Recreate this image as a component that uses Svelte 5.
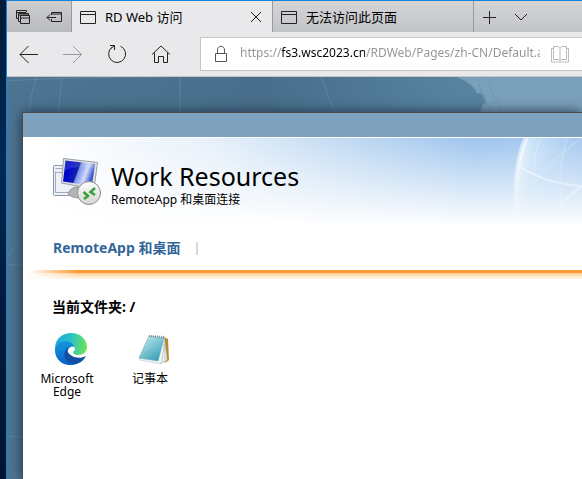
<script>
  let address = $state('https://fs3.wsc2023.cn/RDWeb/Pages/zh-CN/Default.aspx');
</script>

<div class="desktop">
  <div class="window">
    <div class="tabs">
      <div class="tools">
        <button aria-label="Tabs you've set aside">
          <svg width="16" height="16" viewBox="0 0 16 16"><path d="M3.500 9.500H1.500V1.500H11.500V3M1 3.500H11M5.500 12.500H3.500V4.500H13.500V6M4 6H13M5.500 6.500H14.500V14.500H5.500ZM5.500 9H14.500"/></svg>
        </button>
        <button aria-label="Set these tabs aside">
          <svg width="18" height="16" viewBox="0 0 18 16"><path d="M6.500 6V3.500H16.500V12.500H6.500V10M6.500 5H16.500M2 8.500H11M5 5.500L2 8.500L5 11.500"/></svg>
        </button>
      </div>
      <div class="tab active">
        <svg width="16" height="14" viewBox="0 0 16 14"><path d="M.5 1.500H15.500V13.500H.5ZM.5 4.500H15.500"/></svg>
        <span>RD Web 访问</span>
        <button aria-label="Close tab"><svg width="12" height="12" viewBox="0 0 12 12"><path d="M1 1L11 11M11 1L1 11"/></svg></button>
      </div>
      <div class="tab">
        <svg width="16" height="14" viewBox="0 0 16 14"><path d="M.5 1.500H15.500V13.500H.5ZM.5 4.500H15.500"/></svg>
        <span>无法访问此页面</span>
      </div>
      <div class="newtab">
        <button aria-label="New tab"><svg width="14" height="14" viewBox="0 0 14 14"><path d="M7.500 1V14M1 7.500H14"/></svg></button>
        <button aria-label="Tab previews"><svg width="14" height="14" viewBox="0 0 14 14"><path d="M1 4L7 10L13 4"/></svg></button>
      </div>
    </div>

    <div class="nav">
      <button aria-label="Back"><svg width="20" height="20" viewBox="0 0 20 20"><path d="M19 10.500H1M9.500 2L1 10.500L9.500 19"/></svg></button>
      <button aria-label="Forward" disabled><svg width="20" height="20" viewBox="0 0 20 20"><path d="M0 10.500H18M10 2L18.500 10.500L10 19"/></svg></button>
      <button aria-label="Refresh"><svg width="20" height="20" viewBox="0 0 20 20"><path d="M13.500 2.200A8.500 8.500 0 1 1 5 3.200M3 1.500H7.500V6M7.500 1.500L4 4.500"/></svg></button>
      <button aria-label="Home"><svg width="20" height="20" viewBox="0 0 20 20"><path d="M1 10.500L10 2L19 10.500M3.500 8.500V18.500H7.500V12.500H12.500V18.500H16.500V8.500"/></svg></button>
      <div class="address">
        <svg width="14" height="18" viewBox="0 0 14 18"><path d="M1.500 8.500H12.500V16.500H1.500ZM3.500 8.500V5C3.500 0 10.500 0 10.500 5V8.500"/></svg>
        <input type="text" aria-label="Address" bind:value={address} />
        <button aria-label="Reading view"><svg width="20" height="18" viewBox="0 0 20 18"><path d="M3.500 1.500H8.500L10 3L11.500 1.500H16.500V14.500H11.500L10 16L8.500 14.500H3.500ZM10 3V16M3 3.500H1.500V17H18.500V3.500H17"/></svg></button>
      </div>
    </div>

    <main class="page">
      <svg class="backdrop" width="575" height="402" viewBox="0 0 575 402" aria-hidden="true">
        <path class="sky" d="M450 0Q466 7 470 16Q480 17 479 25Q472 28 475 42H575V0Z"/>
        <path d="M455 0L466 10L477 17L479 27L472 36M471 0L474 15L488 42M481 0L485 15L500 42"/>
        <path class="faint" d="M0 4Q60 0 160 0M30 0Q24 14 22 36M55 0L51 36M173 0V36M314 0L328 36M0 188H16M0 359L16 360M0 180L16 160"/>
      </svg>
      <section class="panel">
        <div class="topbar"></div>
        <header>
          <svg class="globe" width="80" height="88" viewBox="0 0 80 88" aria-hidden="true">
            <defs>
              <linearGradient id="haze"><stop offset="0" stop-color="#fff" stop-opacity=".9"/><stop offset=".25" stop-color="#e2f3fc" stop-opacity=".6"/><stop offset="1" stop-color="#cce8fa" stop-opacity="0"/></linearGradient>
            </defs>
            <path fill="url(#haze)" d="M24 0C14 22 11 50 14 88H80V0Z"/>
            <path class="rim" d="M24 0C14 22 12 50 14 88"/>
            <path class="line" d="M19 29Q42 45 80 48M80 48Q60 62 48 82"/>
            <path class="thin" d="M38 0Q28 30 33 60M65 0Q54 35 60 70M80 0Q50 20 33 45M16 54Q40 70 65 72"/>
          </svg>
          <div class="brand">
            <svg width="50" height="50" viewBox="0 0 50 50" aria-hidden="true">
              <defs>
                <linearGradient id="screen" x2="1" y2=".3"><stop offset="0" stop-color="#0818a8"/><stop offset=".25" stop-color="#0006d0"/><stop offset=".52" stop-color="#1020a8"/><stop offset=".56" stop-color="#7890e8"/><stop offset=".8" stop-color="#d2dcfb"/><stop offset="1" stop-color="#4058d0"/></linearGradient>
                <linearGradient id="badge" x2="0" y2="1"><stop offset="0" stop-color="#fff"/><stop offset="1" stop-color="#d4d4d4"/></linearGradient>
              </defs>
              <rect x="1.500" y="7.500" width="24" height="30" rx="1" fill="#edf1f7" stroke="#8796a8"/>
              <path d="M3.500 10.500H10M3.500 13.500V34.500H23M3.500 14.500H10" fill="none" stroke="#9eacbc"/>
              <path d="M16 35Q19 30 23 29L30 31L29 40Q17 40 16 35Z" fill="#b4b4b4" stroke="#999"/>
              <path d="M11.500.5L45.500 4.500L42 31L9.500 25Z" fill="#e0e2e3" stroke="#9b9fa3"/>
              <path d="M13.500 2.500L43 6L40 28L11 23.500Z" fill="url(#screen)"/>
              <path d="M13.500 2.500L43 6L42.500 10Q23 7 12.500 13Z" fill="#fff" opacity=".12"/>
              <circle cx="37" cy="35" r="11.500" fill="url(#badge)" stroke="#8c8c8c"/>
              <path d="M31.500 34L36 38L32 41M43 30L38.500 34L43 37" fill="none" stroke="#35a135" stroke-width="2.500"/>
            </svg>
            <div class="titles">
              <h1>Work Resources</h1>
              <p>RemoteApp 和桌面连接</p>
            </div>
          </div>
          <nav class="section"><a href="#apps">RemoteApp 和桌面</a><i></i></nav>
        </header>
        <div class="rule"></div>
        <div class="content" id="apps">
          <h2>当前文件夹: /</h2>
          <div class="apps">
            <a href="#edge">
              <svg width="34" height="34" viewBox="0 0 34 34" aria-hidden="true">
                <defs>
                  <linearGradient id="e1" y1=".4" x2="1" y2=".5"><stop offset="0" stop-color="#1ba7dc"/><stop offset=".5" stop-color="#2bc4c4"/><stop offset="1" stop-color="#70e351"/></linearGradient>
                  <linearGradient id="e2" x2=".2" y2="1"><stop offset="0" stop-color="#169be0"/><stop offset="1" stop-color="#0861c8"/></linearGradient>
                </defs>
                <path fill="url(#e1)" d="M1 15C2 6 9 1 17 1C27 1 33 8 33 15C33 20 29 23 24 23C20 23 18 21 19 19C21 16 18 11 12 10C7 9 2 12 1 15Z"/>
                <path fill="url(#e2)" d="M1 16C2 11 7 9 11 9C17 9 21 13 20 17C17 14 12 17 12 22C12 28 17 33 23 32C20 33 17 33 14 33C6 32 0 25 1 16Z"/>
                <path fill="#104fa3" d="M14 16C7 21 11 31 19 32C25 33 30 28 32 24C27 27 20 26 17 23C14 21 13 18 17 15Z"/>
                <path fill="#fff" d="M14 18C15 14 21 13 21 17C21 19 19 19 19 21C20 24 26 24 30 22L31 24C26 26 20 25 17 23C14 21 13 20 14 18Z"/>
              </svg>
              <span>Microsoft Edge</span>
            </a>
            <a href="#notepad">
              <svg width="34" height="34" viewBox="0 0 34 34" aria-hidden="true">
                <defs><linearGradient id="note" x2=".7" y2="1"><stop offset="0" stop-color="#d1eef2"/><stop offset=".5" stop-color="#82c8d6"/><stop offset="1" stop-color="#399eb8"/></linearGradient></defs>
                <path d="M27 5L31 7L32 28L28 31Z" fill="#b88932"/>
                <path d="M27 4L30 28L24 32L3 28L2 26Z" fill="#eef4f5" stroke="#b8c5c9" stroke-width=".6"/>
                <path d="M12 4L27 6L21 29L2 26Z" fill="url(#note)" stroke="#75a9b4" stroke-width=".6"/>
                <path d="M27 7L28 29L23 31M27 12L25 30" fill="none" stroke="#b5c0c4" stroke-width=".7"/>
                <path d="M12 4L28 5" stroke="#7f8c90" stroke-width="2" stroke-dasharray="1 1"/>
              </svg>
              <span>记事本</span>
            </a>
          </div>
        </div>
      </section>
    </main>
  </div>
</div>

<style>
  :global(body) { margin: 0; overflow: hidden; }
  * { box-sizing: border-box; }
  .desktop {
    min-height: 100vh; display: flex; padding-left: 6px; color: #000;
    background: linear-gradient(#001b3a, #002a55 35%, #001c3e 60%, #001532);
    font: 12px/16px "Noto Sans", "Noto Sans CJK SC", sans-serif;
  }
  .window { flex: 1; min-width: 0; display: flex; flex-direction: column; border: solid #1882d8; border-width: 1px 0 0 1px; }
  svg { flex: none; fill: none; stroke: #222; }
  .brand svg, .apps svg, .globe { stroke: none; }
  button { border: 0; padding: 0; background: none; display: flex; align-items: center; justify-content: center; }

  .tabs { display: flex; height: 31px; background: linear-gradient(#d4d5d7, #c2c4c7); overflow: hidden; }
  .tools { width: 65px; display: flex; align-items: center; justify-content: space-between; padding: 0 8px; border-right: 1px solid #98999b; background: linear-gradient(#cccdcf, #b9bbbe); }
  .tab { width: 201px; flex: none; display: flex; align-items: center; gap: 9px; padding: 0 10px 0 8px; border-right: 1px solid #989a9e; font-size: 13px; }
  .tab.active { background: #e9e9eb; }
  .tab span { flex: 1; white-space: nowrap; }
  .newtab { display: flex; gap: 18px; padding-left: 8px; }

  .nav { height: 45px; flex: none; display: flex; align-items: center; gap: 24px; padding-left: 12px; background: #e9e9eb; border-bottom: 1px solid #c4c4c6; }
  .nav > button:disabled { opacity: .4; }
  .address { flex: 1; min-width: 0; height: 34px; margin-left: 5px; display: flex; align-items: center; padding: 0 12px 0 13px; background: #fff; border: 1px solid #c5c5c7; border-right: 0; }
  .address svg { stroke: #555; }
  .address button svg { stroke: #bbb; }
  .address input {
    flex: 1; min-width: 0; height: 24px; margin: 0 10px 4px 12px; padding: 0; border: 0; outline: 0;
    font: inherit; color: transparent;
    background: linear-gradient(90deg, #929292 42px, #000 42px 125px, #929292 125px);
    background-clip: text; -webkit-background-clip: text;
  }

  .page { flex: 1; position: relative; overflow: hidden; padding: 35px 0 0 15px; background: linear-gradient(90deg, #4d7592, #486e8b 45%, #55809e 75%, #5e88a5); }
  .backdrop { position: absolute; top: 0; left: 0; stroke: #6f97b4; }
  .backdrop .sky { fill: #7ba0bc; stroke: none; }
  .backdrop .faint { stroke: #6790ab; opacity: .6; }
  .panel { position: relative; min-height: 100%; background: #fff; border: solid #4a4a4c; border-width: 1px 0 0 1px; box-shadow: 0 0 12px #203548; }
  .topbar { height: 25px; background: #7fa3bf; border-bottom: 1px solid #fff; }
  header {
    position: relative; height: 132px; padding: 20px 29px 0;
    background:
      linear-gradient(transparent, #fff 88px),
      linear-gradient(90deg, #fff 20px, #e6f0fa 190px, #b9d5f1 350px, #9fc5ee 450px, #a5c8f0);
  }
  .globe { position: absolute; top: 0; right: 0; mask: linear-gradient(#000 20%, transparent); }
  .rim { stroke: #fff; stroke-width: 5; opacity: .5; }
  .line { stroke: #fff; stroke-width: 2; opacity: .7; }
  .thin { stroke: #fff; opacity: .3; }
  .brand { position: relative; display: flex; gap: 9px; }
  h1 { margin: 2px 0 0; font-size: 25px; line-height: 32px; font-weight: 400; white-space: nowrap; }
  p { margin: 0; }
  .section { display: flex; align-items: center; gap: 16px; margin-top: 30px; padding-left: 1px; }
  .section a { color: #336699; font-size: 14px; line-height: 20px; font-weight: 700; text-decoration: none; }
  .section i { width: 2px; height: 13px; background: #d8d8d8; }
  .rule { height: 12px; background: linear-gradient(#ff9933 3px, #ffd090 3px, #fff 10px); mask: linear-gradient(90deg, transparent 5px, #000 55px); }
  .content { padding: 15px 14px; }
  h2 { margin: 0 0 0 15px; font-size: 14px; line-height: 20px; }
  .apps { display: flex; gap: 23px; margin-top: 15px; }
  .apps a { width: 60px; display: flex; flex-direction: column; align-items: center; gap: 6px; color: #000; text-align: center; line-height: 13px; text-decoration: none; }
  .apps svg { margin-left: 7px; }
</style>
